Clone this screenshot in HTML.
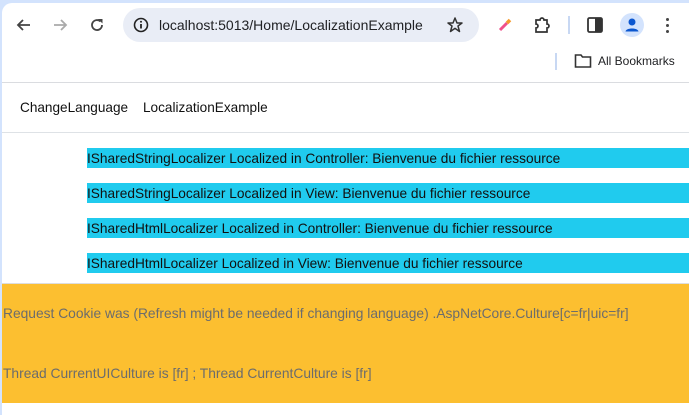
<!DOCTYPE html>
<html><head><meta charset="utf-8"><style>
*{margin:0;padding:0;box-sizing:border-box}
body{width:689px;height:415px;overflow:hidden;background:#d3e3fd;font-family:"Liberation Sans",sans-serif;position:relative}
#win{position:absolute;left:2px;top:3px;right:0;bottom:0;background:#fff;border-top-left-radius:10px;overflow:hidden}
.abs{position:absolute}
#addr{left:121px;top:5px;width:356px;height:34px;border-radius:17px;background:#e9edf6}
#addr span{position:absolute;left:36px;top:9px;font-size:14px;color:#202124}
.bar{position:absolute;left:85px;right:0;height:20px;background:#20cbee;font-size:13.7px;line-height:21px;color:#111;white-space:nowrap}
#yel{left:0;right:0;top:280px;height:120px;background:#fcbf30;border-top:1px solid #ddd;color:#6c6c6c;font-size:13.8px}
</style></head><body>
<div id="win">
 <svg class="abs" style="left:12px;top:12px" width="20" height="20" viewBox="0 0 20 20"><path d="M16 10H4M9 5L4 10L9 15" stroke="#444" stroke-width="1.8" fill="none"/></svg>
 <svg class="abs" style="left:48px;top:12px" width="20" height="20" viewBox="0 0 20 20"><path d="M4 10H16M11 5L16 10L11 15" stroke="#aaa" stroke-width="1.8" fill="none"/></svg>
 <svg class="abs" style="left:85px;top:12px" width="20" height="20" viewBox="0 0 20 20"><path d="M15 10A5 5 0 1 1 13.5 6.5" stroke="#444" stroke-width="1.8" fill="none"/><path d="M11 4H15.5V8.5Z" fill="#444"/></svg>
 <div id="addr" class="abs">
  <svg class="abs" style="left:10px;top:9px" width="16" height="16" viewBox="0 0 16 16"><circle cx="8" cy="8" r="6.5" stroke="#222" stroke-width="1.6" fill="none"/><path d="M8 7V11.5" stroke="#222" stroke-width="1.8"/><circle cx="8" cy="4.8" r="1" fill="#222"/></svg>
  <span>localhost:5013/Home/LocalizationExample</span>
  <svg class="abs" style="left:323px;top:8px" width="18" height="18" viewBox="0 0 18 18"><path d="M9 2L11 7H16L12 10L13.5 15.5L9 12.3L4.5 15.5L6 10L2 7H7Z" stroke="#333" stroke-width="1.5" fill="none" stroke-linejoin="round"/></svg>
 </div>
 <svg class="abs" style="left:495px;top:14px" width="16" height="16" viewBox="0 0 16 16"><path d="M3 13L10 6" stroke="#f0508a" stroke-width="3"/><path d="M10 6L13 3" stroke="#f59a2c" stroke-width="3.5"/></svg>
 <svg class="abs" style="left:530px;top:12px" width="20" height="20" viewBox="0 0 20 20"><path d="M4 5H8A2 2 0 0 1 12 5H15V9A2 2 0 0 1 15 13V17H4V13A2 2 0 0 0 4 9Z" stroke="#333" stroke-width="1.7" fill="none"/></svg>
 <div class="abs" style="left:566px;top:13px;width:2px;height:18px;background:#c8d8f3"></div>
 <svg class="abs" style="left:584px;top:13px" width="18" height="18" viewBox="0 0 18 18"><rect x="2" y="2" width="14" height="14" rx="1.5" stroke="#333" stroke-width="1.8" fill="none"/><rect x="9" y="2" width="7" height="14" fill="#333"/></svg>
 <div class="abs" style="left:618px;top:10px;width:24px;height:24px;border-radius:12px;background:#d3e3fd"></div>
 <svg class="abs" style="left:618px;top:10px" width="24" height="24" viewBox="0 0 24 24"><circle cx="12" cy="9" r="3.5" fill="#0b57d0"/><path d="M5.5 18.5C6 14.5 18 14.5 18.5 18.5Z" fill="#0b57d0"/></svg>
 <div class="abs" style="left:664px;top:15px;width:3px;height:3px;background:#444;border-radius:2px;box-shadow:0 6px #444,0 12px #444"></div>
 <div class="abs" style="left:553px;top:50px;width:2px;height:17px;background:#c8d8f3"></div>
 <svg class="abs" style="left:572px;top:50px" width="18" height="16" viewBox="0 0 18 16"><path d="M1.5 2H7L8.5 4H16.5V14H1.5Z" stroke="#333" stroke-width="1.6" fill="none"/></svg>
 <div class="abs" style="left:596px;top:51px;font-size:12px;color:#202124">All Bookmarks</div>
 <div class="abs" style="left:0;right:0;top:79px;height:1px;background:#dadce0"></div>
 <div class="abs" style="left:18px;top:97px;font-size:13.6px;color:#111">ChangeLanguage</div>
 <div class="abs" style="left:141px;top:97px;font-size:13.6px;color:#111">LocalizationExample</div>
 <div class="abs" style="left:0;right:0;top:129px;height:1px;background:#dee2e6"></div>
 <div class="bar" style="top:145px">ISharedStringLocalizer Localized in Controller: Bienvenue du fichier ressource</div>
 <div class="bar" style="top:180px">ISharedStringLocalizer Localized in View: Bienvenue du fichier ressource</div>
 <div class="bar" style="top:215px">ISharedHtmlLocalizer Localized in Controller: Bienvenue du fichier ressource</div>
 <div class="bar" style="top:250px">ISharedHtmlLocalizer Localized in View: Bienvenue du fichier ressource</div>
 <div id="yel" class="abs">
  <div class="abs" style="left:1px;top:22px;white-space:nowrap">Request Cookie was (Refresh might be needed if changing language) .AspNetCore.Culture[c=fr|uic=fr]</div>
  <div class="abs" style="left:1px;top:82px;white-space:nowrap">Thread CurrentUICulture is [fr] ; Thread CurrentCulture is [fr]</div>
 </div>
</div>
</body></html>
